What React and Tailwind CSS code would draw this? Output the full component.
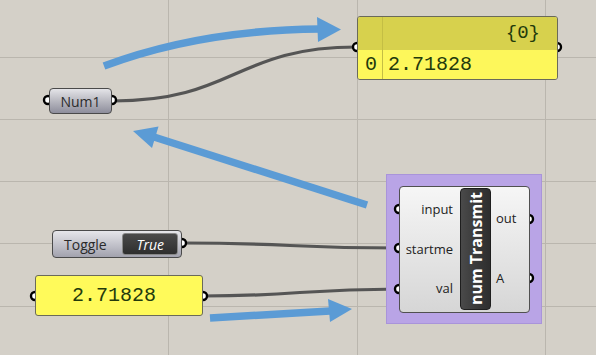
import React from "react";

const sans = { fontFamily: '"Open Sans", "Noto Sans", sans-serif' };
const mono = { fontFamily: '"Liberation Mono", "DejaVu Sans Mono", monospace' };

function Grip({ x, y }) {
  return (
    <circle cx={x} cy={y} r="4" fill="#ffffff" stroke="#000000" strokeWidth="2.4" />
  );
}

export default function App() {
  return (
    <div className="relative w-[596px] h-[355px] overflow-hidden bg-[#d4d0c8]" style={sans}>
      {/* grid + wires + grips (under nodes) */}
      <svg className="absolute inset-0" width="596" height="355">
        <g stroke="#bab6ae" strokeWidth="1">
          <line x1="168.5" y1="0" x2="168.5" y2="355" />
          <line x1="357.5" y1="0" x2="357.5" y2="355" />
          <line x1="545.5" y1="0" x2="545.5" y2="355" />
          <line x1="0" y1="57.5" x2="596" y2="57.5" />
          <line x1="0" y1="119.5" x2="596" y2="119.5" />
          <line x1="0" y1="181.5" x2="596" y2="181.5" />
          <line x1="0" y1="243.5" x2="596" y2="243.5" />
          <line x1="0" y1="306.5" x2="596" y2="306.5" />
        </g>
        <g stroke="#555555" strokeWidth="3.2" fill="none" strokeLinecap="round">
          <path d="M113,101 C235,101 235,47 357,47" />
          <path d="M183,243 C290,243 290,248 399,248" />
          <path d="M203,296 C300,296 300,289 399,289" />
        </g>
        <Grip x={357} y={47} />
        <Grip x={557} y={47} />
        <Grip x={48} y={100} />
        <Grip x={112} y={100} />
        <Grip x={182} y={243} />
        <Grip x={35} y={296} />
        <Grip x={203} y={296} />
      </svg>

      {/* Panel top right */}
      <div className="absolute left-[357px] top-[16px] w-[201px] h-[64px] rounded-[3px] border border-[#6a6a5a] overflow-hidden flex flex-col text-[#233a0c]" style={mono}>
        <div className="relative h-[33px] bg-[#d7d14d] flex items-center justify-end pr-[17px] text-[19px]">
          {"{0}"}
        </div>
        <div className="flex-1 bg-[#fdf75b] flex items-center text-[20px] leading-none">
          <span className="w-[25px] pl-[7px]">0</span>
          <span className="pl-[5px]">2.71828</span>
        </div>
        <div className="absolute left-[24px] top-0 bottom-0 w-px bg-[#c4be44]" />
      </div>

      {/* Num1 */}
      <div className="absolute left-[49px] top-[88px] w-[63px] h-[26px] rounded-[4px] border border-[#4a4a4a] bg-gradient-to-b from-[#e4e4e8] via-[#b8b8c0] to-[#8e8e9c] flex items-center justify-center text-[14px] text-[#2c2c2c]">
        Num1
      </div>

      {/* Toggle */}
      <div className="absolute left-[52px] top-[230px] w-[130px] h-[28px] rounded-[4px] border border-[#4a4a4a] bg-gradient-to-b from-[#e6e6ea] via-[#c4c4cc] to-[#a2a2ae] flex items-center pl-[11px] pr-[3px]">
        <span className="text-[14px] text-[#2a2a2a] w-[59px]">Toggle</span>
        <div className="w-[56px] h-[22px] rounded-[3px] border border-[#888] bg-gradient-to-b from-[#4a4a4a] to-[#2e2e2e] flex items-center justify-center">
          <span className="italic text-white text-[14px]">True</span>
        </div>
      </div>

      {/* Number panel */}
      <div className="absolute left-[35px] top-[275px] w-[168px] h-[41px] rounded-[3px] border border-[#6a6a5a] bg-[#fffa5a] flex items-center justify-center pr-[10px] text-[20px] text-[#233a0c]" style={mono}>
        2.71828
      </div>

      {/* Purple group */}
      <div className="absolute left-[386px] top-[174px] w-[156px] h-[150px] bg-[#b9a4e6] border border-[#a994da]" />

      {/* component grips */}
      <svg className="absolute inset-0 pointer-events-none" width="596" height="355">
        <Grip x={399} y={209} />
        <Grip x={399} y={248} />
        <Grip x={399} y={289} />
        <Grip x={529} y={219} />
        <Grip x={529} y={278} />
      </svg>

      {/* numTransmit component */}
      <div className="absolute left-[399px] top-[186px] w-[131px] h-[127px] rounded-[4px] border border-[#505050] bg-gradient-to-b from-[#f6f6f6] to-[#d6d6d6] flex items-stretch text-[13px] text-[#222]">
        <div className="w-[54px] flex flex-col items-end pr-[1px] pt-[12px]">
          <span className="h-[21px] leading-[21px]">input</span>
          <span className="h-[21px] leading-[21px] mt-[19px]">startme</span>
          <span className="h-[21px] leading-[21px] mt-[18px]">val</span>
        </div>
        <div className="ml-[6px] mt-[1px] mb-[2px] w-[31px] rounded-[4px] border border-[#1e1e1e] bg-gradient-to-r from-[#4a4a4a] via-[#3a3a3a] to-[#2e2e2e] flex items-center justify-center">
          <span className="[writing-mode:vertical-rl] rotate-180 text-white font-bold text-[16px] whitespace-nowrap leading-none">
            num Transmit
          </span>
        </div>
        <div className="flex flex-col pl-[5px] pt-[21px]">
          <span className="h-[21px] leading-[21px]">out</span>
          <span className="h-[21px] leading-[21px] mt-[39px]">A</span>
        </div>
      </div>

      {/* blue arrows */}
      <svg className="absolute inset-0 pointer-events-none" width="596" height="355">
        <g fill="#5b9bd5" stroke="none">
          <path d="M104,66 Q200,30 320,29" stroke="#5b9bd5" strokeWidth="7.5" fill="none" />
          <polygon points="317,17 341,29.5 318,42" />
          <line x1="367" y1="205" x2="154" y2="137" stroke="#5b9bd5" strokeWidth="7.5" />
          <polygon points="133,131 158.5,126.5 152,148" />
          <line x1="210" y1="318" x2="330" y2="311" stroke="#5b9bd5" strokeWidth="7.5" />
          <polygon points="328,299 352,309 330,322" />
        </g>
      </svg>
    </div>
  );
}
